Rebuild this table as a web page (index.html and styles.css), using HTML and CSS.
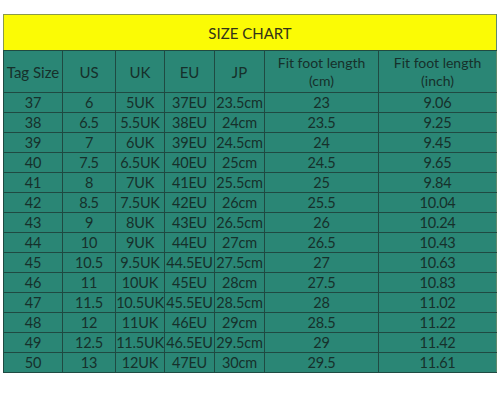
FILE: index.html
```html
<!DOCTYPE html>
<html>
<head>
<meta charset="utf-8">
<link rel="stylesheet" href="styles.css">
</head>
<body>
<table class="chart">
  <colgroup>
    <col class="c1"><col class="c2"><col class="c3"><col class="c4"><col class="c5"><col class="c6"><col class="c7">
  </colgroup>
  <thead>
    <tr class="title"><th colspan="7">SIZE CHART</th></tr>
    <tr class="head">
      <th>Tag Size</th><th>US</th><th>UK</th><th>EU</th><th>JP</th>
      <th>Fit foot length<br>(cm)</th><th>Fit foot length<br>(inch)</th>
    </tr>
  </thead>
  <tbody>
    <tr><td>37</td><td>6</td><td>5UK</td><td>37EU</td><td>23.5cm</td><td>23</td><td>9.06</td></tr>
    <tr><td>38</td><td>6.5</td><td>5.5UK</td><td>38EU</td><td>24cm</td><td>23.5</td><td>9.25</td></tr>
    <tr><td>39</td><td>7</td><td>6UK</td><td>39EU</td><td>24.5cm</td><td>24</td><td>9.45</td></tr>
    <tr><td>40</td><td>7.5</td><td>6.5UK</td><td>40EU</td><td>25cm</td><td>24.5</td><td>9.65</td></tr>
    <tr><td>41</td><td>8</td><td>7UK</td><td>41EU</td><td>25.5cm</td><td>25</td><td>9.84</td></tr>
    <tr><td>42</td><td>8.5</td><td>7.5UK</td><td>42EU</td><td>26cm</td><td>25.5</td><td>10.04</td></tr>
    <tr><td>43</td><td>9</td><td>8UK</td><td>43EU</td><td>26.5cm</td><td>26</td><td>10.24</td></tr>
    <tr><td>44</td><td>10</td><td>9UK</td><td>44EU</td><td>27cm</td><td>26.5</td><td>10.43</td></tr>
    <tr><td>45</td><td>10.5</td><td>9.5UK</td><td>44.5EU</td><td>27.5cm</td><td>27</td><td>10.63</td></tr>
    <tr><td>46</td><td>11</td><td>10UK</td><td>45EU</td><td>28cm</td><td>27.5</td><td>10.83</td></tr>
    <tr><td>47</td><td>11.5</td><td>10.5UK</td><td>45.5EU</td><td>28.5cm</td><td>28</td><td>11.02</td></tr>
    <tr><td>48</td><td>12</td><td>11UK</td><td>46EU</td><td>29cm</td><td>28.5</td><td>11.22</td></tr>
    <tr><td>49</td><td>12.5</td><td>11.5UK</td><td>46.5EU</td><td>29.5cm</td><td>29</td><td>11.42</td></tr>
    <tr><td>50</td><td>13</td><td>12UK</td><td>47EU</td><td>30cm</td><td>29.5</td><td>11.61</td></tr>
  </tbody>
</table>
</body>
</html>
```
FILE: styles.css
```css
html, body {
  margin: 0;
  padding: 0;
  background: #ffffff;
}
body {
  padding: 14px 0 0 3px;
  font-family: Lato, "Open Sans", sans-serif;
}
.chart {
  border-collapse: collapse;
  table-layout: fixed;
  width: 493px;
  border: 1px solid #5f8a6a;
  color: #16302b;
  font-size: 14.5px;
}
.c1 { width: 59px; }
.c2 { width: 53px; }
.c3 { width: 49px; }
.c4 { width: 50px; }
.c5 { width: 50px; }
.c6 { width: 114px; }
.c7 { width: 118px; }
.chart th, .chart td {
  border: 1px solid #1f4a42;
  background: #2a8675;
  text-align: center;
  padding: 0;
  font-weight: normal;
  white-space: nowrap;
  overflow: hidden;
}
.chart td { height: 19px; line-height: 19px; letter-spacing: -0.2px; }
.title th {
  background: #fbfb05;
  color: #33331a;
  height: 35px;
  font-size: 15px;
  border: 1px solid #8a9a4a;
  border-bottom-color: #1f4a42;
}
.head th {
  height: 41px;
  line-height: 18px;
  font-size: 14px;
  color: #16302b;
}
.head th:nth-child(-n+5) { font-size: 15px; }
.chart tr td:last-child, .chart tr th:last-child { border-right-color: #5f8a6a; }
```
